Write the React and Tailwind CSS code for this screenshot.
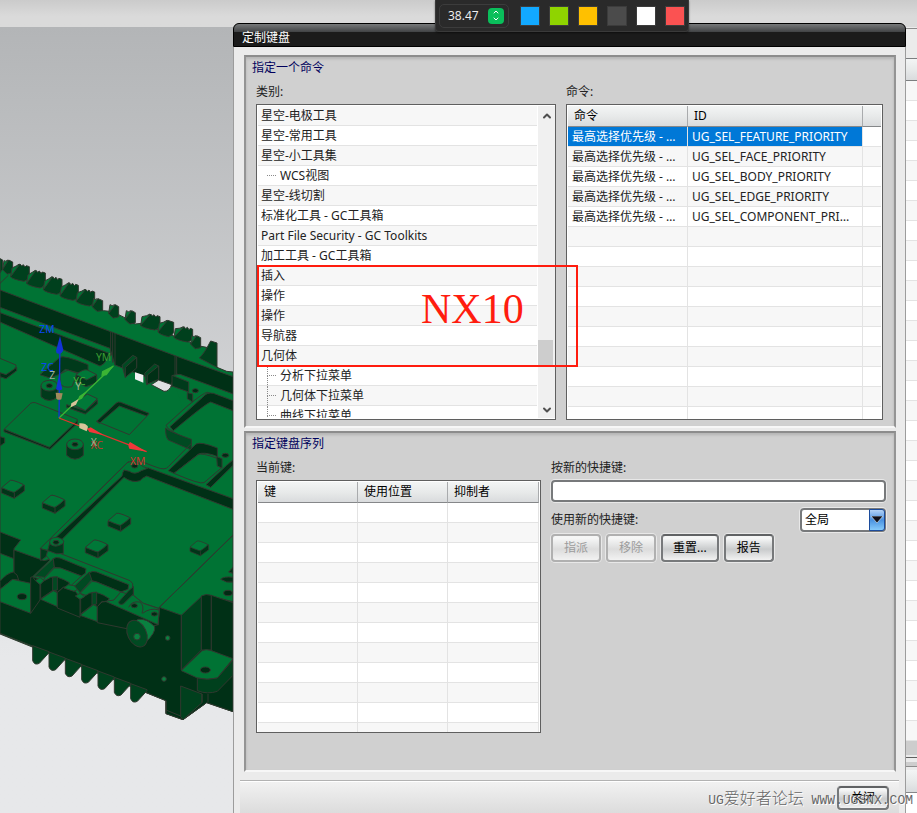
import { ChevronDown, ChevronUp } from "lucide-react";

const categories = [
  { name: "星空-电极工具" },
  { name: "星空-常用工具" },
  { name: "星空-小工具集" },
  { name: "WCS视图", child: true },
  { name: "星空-线切割" },
  { name: "标准化工具 - GC工具箱" },
  { name: "Part File Security - GC Toolkits" },
  { name: "加工工具 - GC工具箱" },
  { name: "插入" },
  { name: "操作" },
  { name: "操作" },
  { name: "导航器" },
  { name: "几何体" },
  { name: "分析下拉菜单", child: true, joined: true },
  { name: "几何体下拉菜单", child: true, joined: true },
  { name: "曲线下拉菜单", child: true, joined: true },
];

const commands = [
  "UG_SEL_FEATURE_PRIORITY",
  "UG_SEL_FACE_PRIORITY",
  "UG_SEL_BODY_PRIORITY",
  "UG_SEL_EDGE_PRIORITY",
  "UG_SEL_COMPONENT_PRIORITY",
];

const swatches = [
  "bg-[#12a9ff]",
  "bg-[#8fd400]",
  "bg-[#ffc000]",
  "bg-[#4b4b4b]",
  "bg-white",
  "bg-[#fb5252]",
];

// fins along the far edge of the housing: left x, left y, top x, top y, right x
const topFins = [
  [8, 88, 26, 60, 38],
  [32, 110, 60, 72, 88],
  [80, 130, 108, 91, 136],
  [130, 149, 158, 110, 186],
  [180, 167, 208, 128, 235],
  [228, 184, 257, 148, 284],
  [277, 200, 294, 176, 308],
  [326, 220, 346, 194, 356],
  [375, 238, 395, 212, 406],
  [422, 256, 452, 222, 480],
  [474, 276, 503, 241, 521],
  [522, 292, 552, 260, 578],
  [572, 312, 590, 287, 602],
];

const bottomFins = [98, 147, 196, 245, 294, 343, 392];

const chips = [
  [5, 721],
  [127, 766],
  [324, 820],
  [256, 900],
];

function Fin({ fin }) {
  const [lx, ly, tx, ty, rx] = fin;
  const wide = rx - tx > 20;
  const top = wide
    ? `L${tx + 5} ${ty + 6}L${tx + 10} ${ty + 2}L${tx + 15} ${ty + 9}L${tx + 19} ${ty + 5}L${rx} ${ty + 8}`
    : `L${rx} ${ty + 6}`;
  return (
    <g>
      <path fill="#007334" d={`M${lx} ${ly}L${lx + 4} ${ly - 26}Q${tx - 10} ${ty + 6} ${tx - 2} ${ty}L${tx + 4} ${ty + 20}Z`} />
      <path
        fill="#00401d"
        d={`M${lx} ${ly}L${tx} ${ty}${top}V${ty + 36}Q${rx - 4} ${ly + 12} ${rx - 16} ${ly + 14}Q${lx + 6} ${ly + 8} ${lx} ${ly}Z`}
      />
    </g>
  );
}

function Chip({ x, y }) {
  return (
    <g>
      <path fill="#003518" d={`M${x} ${y + 24}V${y + 38}L${x + 38} ${y + 54}L${x + 68} ${y + 32}V${y + 14}Z`} />
      <path fill="#007838" d={`M${x} ${y + 22}L${x + 26} ${y}Q${x + 34} ${y - 2} ${x + 64} ${y + 12}Q${x + 68} ${y + 16} ${x + 38} ${y + 36}Q${x + 32} ${y + 36} ${x} ${y + 22}Z`} />
      <path fill="none" d={`M${x + 38} ${y + 37}V${y + 54}`} />
    </g>
  );
}

function Boss({ x, y }) {
  return (
    <g>
      <path fill="#003a1b" d={`M${x - 25} ${y}V${y + 33}Q${x} ${y + 56} ${x + 25} ${y + 33}V${y}Z`} />
      <ellipse cx={x} cy={y} rx="25" ry="16" fill="#007436" />
      <ellipse cx={x} cy={y} rx="9" ry="6" fill="#002b13" />
    </g>
  );
}

function Model() {
  return (
    <svg viewBox="0 -639 699 2358" className="block h-[786px] w-full" preserveAspectRatio="xMinYMin slice">
      <g stroke="#30382f" strokeWidth="3" strokeLinejoin="round">
        {/* housing silhouette */}
        <path fill="#007334" d="M0 80L30 96L80 116L284 192L310 212L330 214L356 224L380 236L405 252L425 250L598 318L620 322L651 382L680 394L699 396V1415L620 1388L549 1439L498 1421V1382L0 1182Z" />
        <path fill="#00401d" d="M0 56L8 60V88L0 98Z" />
        {topFins.map((fin) => (
          <Fin key={fin[0]} fin={fin} />
        ))}
        <path fill="#00401d" d="M598 354Q612 342 632 303L651 309V382Z" />
        <path fill="none" d="M0 130L25 106" />

        {/* far wall */}
        <path fill="#003016" d="M0 150L332 275L525 347L699 410V465L530 402L515 430V440L345 375L330 325L0 202Z" />
        <path fill="#003016" d="M0 218L335 343L310 372L300 378L0 246Z" />
        <path fill="none" d="M332 275V345M338 276V368M345 280V374M525 347V405M530 350V402" />
        <path fill="#f1f2f3" stroke="none" d="M405 397L430 405V428L405 418Z" />
        <path fill="#dfe0e1" d="M454 434L476 420L515 434Q508 455 492 454Z" />
        <path fill="#004a22" d="M366 376L398 346L410 352V380L376 412Z" />
        <path fill="#003016" d="M376 382L410 352V384L376 412Z" />
        <path fill="#004a22" d="M434 400L464 372L476 378V415L440 434Z" />
        <path fill="#003016" d="M442 405L476 378V418L442 432Z" />
        <path fill="#007334" d="M518 406L540 403L700 462V484L622 457Q610 458 560 500L498 556Q500 570 575 603" />
        <path fill="#003a1b" d="M516 406L566 426V456L516 438Z" />
        <path fill="#003a1b" d="M562 458L578 462V486L562 476Z" />
        <ellipse cx="586" cy="452" rx="9" ry="6" fill="#002b13" />

        {/* right-hand pockets */}
        <path fill="#003016" d="M510 560L608 472Q620 456 640 460L699 482V512L632 486Q618 490 520 572Z" />
        <path fill="#004a22" d="M497 564Q505 574 574 598V630L505 600Q496 590 497 564Z" />
        <path fill="#003016" d="M505 692L588 612Q602 604 652 624V650L640 645Q610 636 596 642L522 700Z" />
        <path fill="#007334" d="M522 700L594 644Q604 637 654 656L664 684L612 728Q600 734 522 700Z" />
        <path fill="#003016" d="M618 734L680 676L699 660V676L632 742Z" />
        <path fill="#003a1b" d="M650 650L666 656V684L652 678Z" />
        <ellipse cx="676" cy="646" rx="10" ry="6" fill="#002b13" />
        <path fill="none" d="M574 610L505 680Q496 692 470 682L412 660" />

        {/* plates and bosses on the floor */}
        <path fill="none" d="M12 568L92 490Q98 486 106 488L232 538Q238 546 150 624Q142 624 12 568Z" />
        <path fill="#003016" d="M12 568L148 622L232 542V550L150 628L12 575Z" />
        <path fill="#003016" d="M290 544L348 490Q354 484 362 487L447 520L440 528L358 498L298 550Z" />
        <path fill="none" d="M290 544L388 584L447 522" />
        <path fill="#007334" d="M0 355L48 375Q52 382 20 408L0 400" />
        <path fill="#003016" d="M0 398L18 404L50 382V392L18 416L0 410Z" />
        <path fill="#003016" d="M0 590L14 594V608L0 618Z" />
        <path fill="#003a1b" d="M120 404L180 352Q190 344 264 374V392L240 400L196 388L180 402L150 414Z" />
        <path fill="#007334" d="M180 402L204 390L232 400L216 440Q190 446 180 430Z" />
        <path fill="#003a1b" d="M228 404L290 406V428L258 440L228 424Z" />
        <path fill="#007838" d="M228 404Q250 386 262 390L290 404L260 420Z" />
        <path fill="#003a1b" d="M200 494L256 512L292 480V492L256 522L200 502Z" />
        <path fill="#007838" d="M216 492L262 462L292 476L256 512Z" />
        <Boss x={148} y={437} />
        <Boss x={225} y={613} />

        {/* large pocket in front */}
        <path fill="#007334" d="M120 926L382 668Q402 656 430 680L699 780V885L478 1102L476 1152L398 1122V1038L180 950Z" />
        <path fill="#003016" d="M168 892L366 708Q368 696 372 690L388 694Q404 706 424 692L445 684L699 776V808L440 708Q426 714 420 722Q396 730 372 712L184 900Z" />
        <path fill="none" d="M270 780L386 664M478 1102L699 886" />
        <ellipse cx="404" cy="678" rx="9" ry="6" fill="#002b13" />
        <path fill="none" d="M140 780L158 766L190 778" />

        {chips.map(([x, y]) => (
          <Chip key={`${x}-${y}`} x={x} y={y} />
        ))}
        <g transform="translate(570 903) scale(.82)">
          <Chip x={0} y={0} />
        </g>

        {/* near wall */}
        <path fill="#003016" d="M0 876L62 900L42 926V995L0 1040Z" />
        <path fill="#007334" d="M0 940L42 956V995L0 1034Z" />
        <path fill="#003016" d="M42 930L132 962L180 950L398 1038V1124L474 1152L478 1102L545 1126L620 1066L699 1085V1415L620 1388L549 1439L498 1421V1382L98 1218L0 1180V1086L42 1060Z" />
        <path fill="#003016" d="M0 1024Q20 1000 40 996Q54 1002 56 1020L38 1018L0 1048Z" />
        <path fill="#007334" d="M0 1048L38 1018L92 1030V1120L0 1085Z" />
        <ellipse cx="66" cy="1070" rx="14" ry="9" fill="#002b13" />

        {/* notched pockets on the near wall */}
        <g transform="translate(0 870)">
          <path fill="#007334" d="M98 140L150 90L120 56L180 70L390 152Q402 160 398 172L400 196L430 220L478 236L474 282L300 215L240 200L180 170Z" />
          <path fill="#004a22" d="M104 138L160 86L163 110L134 142Z" />
          <path fill="#003016" d="M160 86Q168 80 180 84L258 116L256 130L244 138L180 114L163 112Z" />
          <path fill="#007334" d="M134 144L163 114L182 114L244 138L214 166L130 152Z" />
          <path fill="#003016" d="M122 158L152 142Q172 136 208 158L204 168L190 172L172 186L160 180L122 206Z" />
          <path fill="#004a22" d="M158 142L172 140V180L158 182Z" />
          <path fill="#007334" d="M122 208L160 182L172 188V230Z" />
          <path fill="#007334" d="M106 152L120 142L132 152L120 164Z" />
          <path fill="#003016" d="M98 140L106 152L120 164V210L92 250V142Z" />
          <path fill="#003016" d="M172 188L190 172L226 184L240 202V262L172 234Z" />
          <path fill="#007334" d="M192 174L204 164L228 168L234 178L222 184Z" />
          <path fill="#004a22" d="M224 168L268 126L276 148L240 188Z" />
          <path fill="#003016" d="M268 128Q278 122 290 126L386 164L384 178L362 186L290 156L276 152Z" />
          <path fill="#007334" d="M240 190L276 154L290 156L364 186L340 212L310 214Z" />
          <path fill="#003016" d="M242 206L268 190Q290 180 328 206L318 216L306 214L292 230L280 222L242 252Z" />
          <path fill="#004a22" d="M276 188L290 186V222L276 226Z" />
          <path fill="#007334" d="M240 256L280 224L292 230V275Z" />
          <path fill="#007334" d="M226 198L240 190L254 200L240 208Z" />
          <path fill="#003016" d="M292 230L306 216L340 212L476 284L400 300L292 278Z" />
          <path fill="#007334" d="M316 214L342 210L362 186L400 196L430 220L478 236L474 284Z" />
          <path fill="#003a1b" d="M356 216L386 182L400 170V192L370 222Q356 226 356 216Z" />
          <path fill="none" d="M386 232Q394 212 420 216Q434 228 426 250M428 250Q450 232 478 240" />
        </g>
        <ellipse cx="403" cy="1097" rx="9" ry="6" fill="#002b13" />
        <ellipse cx="463" cy="1122" rx="9" ry="6" fill="#002b13" />
        <path fill="#003a1b" d="M122 926L150 934Q170 946 190 940V904L150 906L138 950L122 962Z" />
        <path fill="#007334" d="M150 912Q144 892 172 892Q196 898 190 910Q166 926 150 912Z" />
        <ellipse cx="168" cy="907" rx="9" ry="6" fill="#002b13" />

        {/* port */}
        <path fill="#0a8040" d="M388 1160L414 1138Q440 1134 464 1160Q468 1178 436 1208Z" />
        <ellipse cx="411" cy="1181" rx="28" ry="42" transform="rotate(-25 411 1181)" fill="#004a22" />
        <circle cx="411" cy="1190" r="10" fill="#0a8040" />
        <circle cx="503" cy="1194" r="7" fill="#0a8040" />
        <circle cx="492" cy="1317" r="7" fill="#0a8040" />

        {/* right corner */}
        <path fill="#00401d" d="M544 1126L606 1068L604 1230L544 1290Z" />
        <path fill="#003016" d="M604 1068Q618 1060 634 1066V1230H604Z" />
        <path fill="#003016" d="M634 1066L699 1088V1260L634 1232Z" />
        <path fill="#007334" d="M544 1292L606 1232Q618 1226 634 1232L699 1256L652 1314Q620 1322 592 1314Z" />
        <path fill="#00401d" d="M592 1314Q622 1322 652 1314L699 1260V1306L652 1354Q622 1364 592 1352Z" />
        <path fill="#00401d" d="M542 1338L606 1362V1388L549 1439L542 1430Z" />
        <path fill="none" d="M498 1382V1421M544 1126V1290M606 1362V1388M624 1362V1386M498 1410L542 1428" />
        <ellipse cx="616" cy="1290" rx="15" ry="9" fill="#002b13" />
        <ellipse cx="684" cy="1059" rx="13" ry="8" fill="#002b13" />
        <path fill="#003016" d="M662 1018Q672 1008 699 1012V1026Q680 1030 662 1018ZM686 996L699 982V1000Z" />
        {bottomFins.map((x, i) => (
          <path
            key={x}
            fill="#00401d"
            d={`M${x} ${1217 + i * 19}V${1262 + i * 19}Q${x + 6} ${1277 + i * 19} ${x + 20} ${1270 + i * 19}L${x + 49} ${1238 + i * 19}L${x + 49} ${1235 + i * 19}Z`}
          />
        ))}
      </g>

      {/* coordinate triads */}
      <g strokeWidth="4">
        <path stroke="#1233d6" d="M177 534L180 300" />
        <path fill="#1233d6" d="M180 288L190 330Q186 344 170 340L168 332ZM177 405L187 448Q178 454 168 448Z" />
        <path fill="#a08a5c" d="M167 458L188 460L184 478Q176 482 169 476Z" />
        <path stroke="#3bb434" d="M177 534L340 378" />
        <path fill="#3bb434" d="M342 376L320 406L304 408L306 394ZM262 452L246 476L232 482L238 468Z" />
        <path fill="#d8c49a" d="M236 477L228 494L212 502L214 490Z" />
        <path stroke="#e4302e" d="M177 534L440 635" />
        <path fill="#f0383a" d="M440 635L388 626Q382 614 390 606ZM312 586L268 576L262 566L272 562Z" />
        <path fill="#d8c49a" d="M238 550Q256 548 264 560L260 574L238 564Z" />
      </g>
      <g fontSize="31" fontFamily="'Noto Sans', sans-serif">
        <text x="118" y="279" fill="#0a46f5">ZM</text>
        <text x="124" y="393" fill="#0a46f5">ZC</text>
        <text x="148" y="416" fill="#9db19a">Z</text>
        <text x="288" y="362" fill="#3a9c33">YM</text>
        <text x="220" y="436" fill="#3fae38">YC</text>
        <text x="226" y="450" fill="#a8b595">Y</text>
        <text x="272" y="627" fill="#c8332c">XC</text>
        <text x="272" y="618" fill="#a8b595">X</text>
        <text x="390" y="675" fill="#d2362f">XM</text>
      </g>
    </svg>
  );
}

function Group({ title, className, children }) {
  return (
    <section className={`mx-[10px] mr-[9px] border-2 border-t-[#8c8c8c] border-x-[#949494] border-b-[#f7f7f7] bg-[#d0d0d0] pl-[10px] shadow-[inset_0_2px_3px_#b4b4b4] ${className}`}>
      <h2 className="-ml-1 pt-px text-[#00005c]">{title}</h2>
      {children}
    </section>
  );
}

const headCell =
  "h-[21px] border-b border-b-[#858789] border-r border-r-[#a9abad] bg-linear-to-b from-[#f3f5f5] via-[#e8eaea] via-50% to-[#d9dbdd] p-0 pl-[6px] text-left font-normal leading-5 text-black last:border-r-0";
const bodyCell =
  "h-5 truncate border-b border-r border-[#e3e3e3] p-0 pl-1 pr-[6px] leading-[19px] last:border-r-0";

function GridTable({ widths, heads, rows, total, labelledBy }) {
  return (
    <table aria-labelledby={labelledBy} className="w-full table-fixed border-separate border-spacing-0">
      <colgroup>
        {widths.map((w, i) => (
          <col key={i} className={w} />
        ))}
      </colgroup>
      <thead>
        <tr>
          {heads.map((h, i) => (
            <th key={i} className={headCell}>{h}</th>
          ))}
        </tr>
      </thead>
      <tbody>
        {Array.from({ length: total }, (_, r) => (
          <tr key={r} className="odd:bg-white even:bg-[#f7f7f7]">
            {heads.map((_, c) => (
              <td
                key={c}
                className={`${bodyCell} ${r === 0 && rows[0] && c < 2 ? "bg-[#0078d7] text-white" : ""}`}
              >
                {rows[r]?.[c]}
              </td>
            ))}
          </tr>
        ))}
      </tbody>
    </table>
  );
}

function PushButton({ children, className = "", ...props }) {
  return (
    <button
      type="button"
      className={`rounded-[4px] border-2 border-[#77797b] border-t-[#606264] bg-linear-to-b from-[#f5f6f6] from-10% via-[#c9cbcc] via-55% to-[#f2f2f2] text-black shadow-[0_0_0_1px_#e8e8e8] disabled:border-[#b0b0b0] disabled:via-[#dcdcdc] disabled:text-[#9c9c9c] ${className}`}
      {...props}
    >
      {children}
    </button>
  );
}

function CategoryList() {
  return (
    <div className="flex h-[316px] overflow-hidden border border-[#5f5f5f] bg-white py-px pl-px">
      <ul role="listbox" aria-labelledby="category-label" className="flex-1 overflow-hidden">
        {categories.map((item, i) => (
          <li
            key={i}
            role="option"
            aria-selected="false"
            className="flex h-5 items-stretch border-b border-[#e3e3e3] pl-[3px] leading-[19px] odd:bg-[#f7f7f7]"
          >
            {item.child && (
              <span className="ml-[6px] mr-1 flex w-[9px] flex-col">
                <span className={`h-[10px] border-b border-dotted border-[#8a8a8a] ${item.joined ? "border-l" : ""}`} />
                <span className={item.joined ? "flex-1 border-l border-dotted border-[#8a8a8a]" : ""} />
              </span>
            )}
            {item.name}
          </li>
        ))}
      </ul>
      <div className="ml-px flex w-[17px] flex-col items-center bg-[#f0f0f0] text-[#505050]">
        <ChevronUp size={12} strokeWidth={4} className="mt-1" />
        <div className="mt-auto h-[26px] w-[15px] self-start bg-[#cdcdcd]" />
        <ChevronDown size={12} strokeWidth={4} className="mb-[2px] mt-[38px]" />
      </div>
    </div>
  );
}

function KeyboardDialog() {
  return (
    <div role="dialog" aria-labelledby="dialog-title" className="-mt-1 flex min-w-0 flex-1 flex-col">
      <header className="h-6 rounded-t-[6px] border border-black bg-linear-to-b from-[#77797a] to-[#414345] bg-[length:100%_8px] bg-no-repeat bg-[#1b1b1b] pl-2 text-white">
        <h1 id="dialog-title" className="pt-[6px] leading-4">定制键盘</h1>
      </header>
      <div className="flex flex-1 flex-col border-x border-[#9c9c9c] bg-[#ebebeb] pt-2">
        <Group title="指定一个命令" className="pb-[6px] pr-[11px]">
          <div className="mt-1 grid grid-cols-[300px_minmax(0,1fr)] gap-x-[10px]">
            <div>
              <p id="category-label" className="mb-[2px]">类别:</p>
              <div className="relative">
                <CategoryList />
                {/* hand-drawn mark over the NX10 entries */}
                <div className="pointer-events-none absolute left-px top-[161px] h-[102px] w-[321px] border-2 border-[#ff1c0e]">
                  <span className="absolute left-[162px] top-[18px] font-['Liberation_Serif',serif] text-[42px] leading-[48px] text-[#ff1c0e]">
                    NX10
                  </span>
                </div>
              </div>
            </div>
            <div>
              <p id="command-label" className="mb-[2px]">命令:</p>
              <div className="h-[316px] overflow-hidden border border-[#5f5f5f] bg-white p-px">
                <GridTable
                  labelledBy="command-label"
                  widths={["w-[120px]", "w-[175px]", ""]}
                  heads={["命令", "ID", ""]}
                  rows={commands.map((id) => ["最高选择优先级 - 特征", id])}
                  total={15}
                />
              </div>
            </div>
          </div>
        </Group>

        <Group title="指定键盘序列" className="mt-[3px] flex-1 pr-2">
          <div className="mt-1 grid grid-cols-[285px_minmax(0,1fr)] gap-x-[10px]">
            <div>
              <p id="keys-label" className="mb-[2px]">当前键:</p>
              <div className="h-[253px] overflow-hidden border border-[#5f5f5f] bg-white p-px">
                <GridTable
                  labelledBy="keys-label"
                  widths={["w-[100px]", "w-[90px]", "w-[91px]", ""]}
                  heads={["键", "使用位置", "抑制者", ""]}
                  rows={[]}
                  total={12}
                />
              </div>
            </div>
            <div>
              <label htmlFor="new-key" className="mb-[2px] block">按新的快捷键:</label>
              <input
                id="new-key"
                className="block h-[22px] w-full rounded-[4px] border-2 border-[#77797b] bg-white px-1 shadow-[0_0_0_1px_#e8e8e8]"
              />
              <div className="mt-[6px] flex items-center justify-between">
                <label htmlFor="scope">使用新的快捷键:</label>
                <span className="relative block">
                  <select
                    id="scope"
                    className="block h-6 w-[86px] appearance-none rounded-[4px] border-2 border-[#77797b] bg-white pl-[3px] text-black shadow-[0_0_0_1px_#e8e8e8]"
                  >
                    <option>全局</option>
                  </select>
                  <span className="pointer-events-none absolute inset-y-px right-px flex w-4 items-center justify-center rounded-r-[3px] border border-[#1c4c9c] bg-linear-to-b from-[#b4d3f5] via-[#4a92e0] to-[#86cbfb]">
                    <svg viewBox="0 0 12 8" className="h-2 w-3">
                      <path d="M0 0H12L6 7Z" fill="#101018" stroke="#dfeefc" strokeWidth=".6" />
                    </svg>
                  </span>
                </span>
              </div>
              <div className="mt-[2px] flex gap-[5px]">
                <PushButton disabled className="h-7 px-[11px]">指派</PushButton>
                <PushButton disabled className="h-7 px-[11px]">移除</PushButton>
                <PushButton className="h-7 px-[10px]">重置...</PushButton>
                <PushButton className="h-7 px-[11px]">报告</PushButton>
              </div>
            </div>
          </div>
        </Group>

        <footer className="mx-[6px] mt-2 flex justify-end border-t border-[#b2b2b2] bg-linear-to-b from-[#f2f2f2] to-[#dcdcdc] pb-[3px] pr-[10px] pt-[5px] shadow-[inset_0_1px_0_white]">
          <PushButton className="h-6 w-[52px]">关闭</PushButton>
        </footer>
      </div>
    </div>
  );
}

function SidePanel() {
  return (
    <aside className="flex w-[11px] shrink-0 flex-col bg-[#ebebeb]">
      <div className="mt-px h-[30px] border-t border-[#8c8c8c]" />
      <div className="h-[23px] border-y border-[#7c7e80] bg-linear-to-b from-[#f3f5f5] via-[#e8eaea] via-50% to-[#d9dbdd]" />
      {Array.from({ length: 33 }, (_, i) => (
        <div key={i} className="h-5 border-b border-[#e3e3e3] odd:bg-[#f7f7f7] even:bg-white" />
      ))}
      <div className="h-[14px] bg-[#cdcdcd]" />
      <div className="mt-[2px] h-[5px] border-t border-[#5f5f5f]" />
      <div className="h-[5px] border-b border-[#8c8c8c] bg-[#cdcdcd]" />
      <div className="mt-[3px] h-[23px] border-b border-[#858789] bg-linear-to-b from-[#f3f5f5] via-[#e8eaea] via-50% to-[#d9dbdd]" />
      <div className="flex-1 bg-white" />
    </aside>
  );
}

function Recorder() {
  return (
    <div className="absolute left-[435px] top-0 flex h-8 items-center rounded-b-[4px] border border-t-0 border-[#3a3a3a] bg-[#2a2a2a] px-[3px] shadow-[0_1px_2px_#00000080]">
      <div className="flex h-6 w-[70px] items-center justify-between rounded-[5px] border border-[#3c3c3c] pl-2 pr-1 font-['Open_Sans',sans-serif] text-[12px] text-[#f2f2f2]">
        38.47
        <button type="button" aria-label="zoom" className="flex size-4 flex-col items-center justify-center rounded-[4px] bg-[#0abf5b] text-white">
          <ChevronUp size={8} strokeWidth={3} className="-mb-px" />
          <ChevronDown size={8} strokeWidth={3} />
        </button>
      </div>
      <div className="ml-[11px] flex gap-[9px]">
        {swatches.map((color) => (
          <button key={color} type="button" aria-label="color" className={`size-5 border border-[#3c3c3c] ${color}`} />
        ))}
      </div>
    </div>
  );
}

export default function App() {
  return (
    <div className="relative flex min-h-screen flex-col overflow-hidden bg-[#e6e7e8] font-['Noto_Sans','Noto_Sans_CJK_SC',sans-serif] text-[12px] leading-5 text-[#222]">
      <div className="h-[27px] bg-linear-to-b from-[#cbcbcb] to-[#dadada] to-60%" />
      <main className="flex flex-1">
        <div className="w-[233px] shrink-0 overflow-hidden bg-linear-to-b from-[#b3b5b7] to-[#e7e8ea] to-80%">
          <Model />
        </div>
        <KeyboardDialog />
        <SidePanel />
      </main>
      <Recorder />
      <p className="pointer-events-none absolute bottom-0 right-1 whitespace-pre font-['Liberation_Mono','Noto_Sans_CJK_SC',monospace] text-[13px] leading-6 text-[#666] [text-shadow:1px_1px_0_#fff]">
        UG<span className="text-[16px] font-light">爱好者论坛</span> WWW.UGSNX.COM
      </p>
    </div>
  );
}
